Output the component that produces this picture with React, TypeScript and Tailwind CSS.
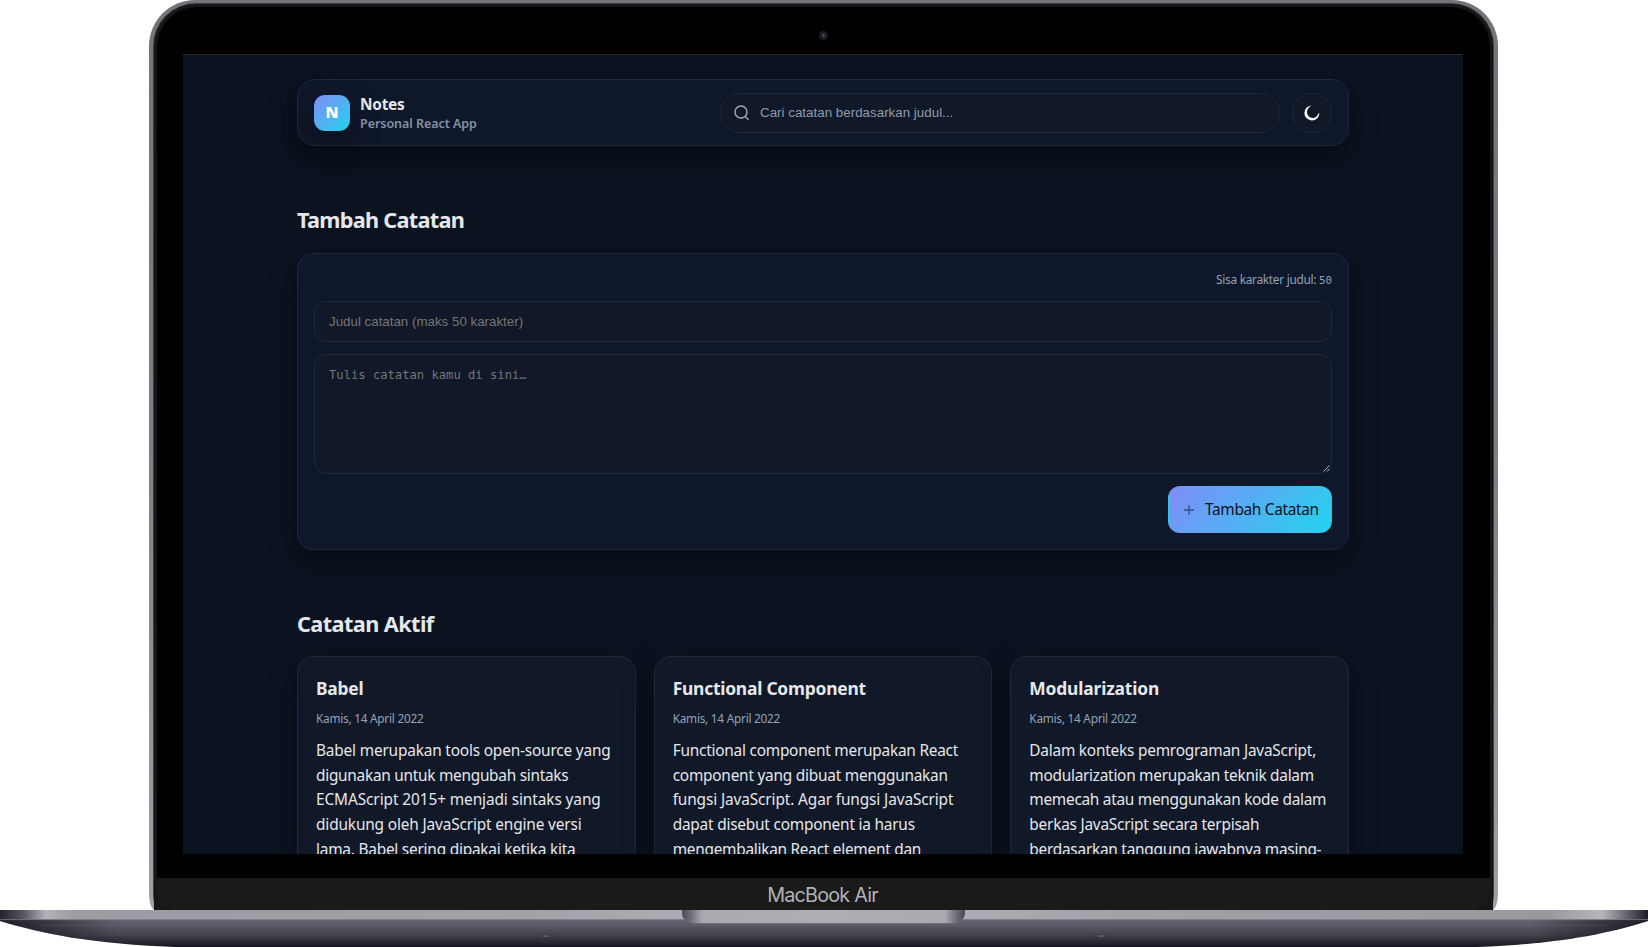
type Line = [text: string, tracking: string];

const notes: { title: string; tracking: string; lines: Line[] }[] = [
  {
    title: "Babel",
    tracking: "tracking-[-0.2px]",
    lines: [
      ["Babel merupakan tools open-source yang", "tracking-[-0.18px]"],
      ["digunakan untuk mengubah sintaks", "tracking-[-0.27px]"],
      ["ECMAScript 2015+ menjadi sintaks yang", "tracking-[-0.09px]"],
      ["didukung oleh JavaScript engine versi", "tracking-[-0.15px]"],
      ["lama. Babel sering dipakai ketika kita", "tracking-[-0.22px]"],
    ],
  },
  {
    title: "Functional Component",
    tracking: "tracking-[-0.22px]",
    lines: [
      ["Functional component merupakan React", "tracking-[-0.23px]"],
      ["component yang dibuat menggunakan", "tracking-[-0.23px]"],
      ["fungsi JavaScript. Agar fungsi JavaScript", "tracking-[-0.12px]"],
      ["dapat disebut component ia harus", "tracking-[-0.21px]"],
      ["mengembalikan React element dan", "tracking-[-0.26px]"],
    ],
  },
  {
    title: "Modularization",
    tracking: "tracking-[-0.16px]",
    lines: [
      ["Dalam konteks pemrograman JavaScript,", "tracking-[-0.22px]"],
      ["modularization merupakan teknik dalam", "tracking-[-0.27px]"],
      ["memecah atau menggunakan kode dalam", "tracking-[-0.27px]"],
      ["berkas JavaScript secara terpisah", "tracking-[-0.23px]"],
      ["berdasarkan tanggung jawabnya masing-", "tracking-[-0.25px]"],
    ],
  },
];

function Header() {
  return (
    <header className="flex h-[67px] items-center rounded-[18px] border border-[#1e2838] bg-[#0f172a] px-4 shadow-[0_10px_30px_rgba(0,0,0,0.35)]">
      <div className="flex size-9 items-center justify-center rounded-[11px] bg-[linear-gradient(135deg,#818cf8,#22d3ee)] shadow-[0_10px_30px_rgba(0,0,0,0.35)]">
        <span className="text-[15.5px] leading-none font-black text-white">N</span>
      </div>
      <div className="ml-[10px] flex flex-col pt-[2px]">
        <span className="text-[15.4px] leading-[19px] font-bold tracking-[-0.25px]">Notes</span>
        <span className="text-[12.5px] leading-[19px] font-semibold tracking-[-0.05px] text-[#8491a5]">Personal React App</span>
      </div>
      <div className="ml-auto flex h-10 w-[560px] items-center rounded-full border border-[#1f2937] bg-[#111827] pl-[13px]">
        <svg width="16" height="16" viewBox="0 0 16 16" fill="none" stroke="#a3a9b5" strokeWidth="1.4" className="shrink-0">
          <circle cx="7" cy="7" r="6" />
          <path d="M11.2 11.5 14.5 14.8" />
        </svg>
        <span className="ml-[10px] font-['Liberation_Sans',sans-serif] text-[13.333px] leading-4 tracking-[0.02px] text-[#8e9bb0]">
          Cari catatan berdasarkan judul...
        </span>
      </div>
      <button className="ml-3 flex size-10 items-center justify-center rounded-full border border-[#1f2937] bg-[#111827]">
        <svg width="16" height="16" viewBox="0 0 16 16" fill="#fff">
          <path d="M7.6 0.5A7.5 7.5 0 1 0 15.4 8.2L14.3 8.6A5.9 5.9 0 0 1 9.2 13C5.8 13.2 3 10.6 3 7.1 3 4.2 4.8 2 7.6 0.5Z" />
        </svg>
      </button>
    </header>
  );
}

function NoteForm() {
  return (
    <section className="mt-[17px] flex h-[297px] flex-col rounded-2xl border border-[#1e2838] bg-[#0f172a] px-4 shadow-[0_10px_30px_rgba(0,0,0,0.35)]">
      <p className="mt-[15px] h-5 shrink-0 text-right text-[11.9px] leading-5 tracking-[-0.3px] text-[#94a3b8]">
        Sisa karakter judul: <span className="font-['DejaVu_Sans_Mono',monospace] text-[10.8px] tracking-normal">50</span>
      </p>
      <div className="mt-3 flex h-[41px] shrink-0 items-center rounded-xl border border-[#1f2937] bg-[#111827] px-[14px] font-['Liberation_Sans',sans-serif] text-[13.333px] text-[#757575]">
        Judul catatan (maks 50 karakter)
      </div>
      <div className="relative mt-3 h-[120px] shrink-0 rounded-xl border border-[#1f2937] bg-[#111827] px-[14px] pt-3 font-['DejaVu_Sans_Mono',monospace] text-[12.17px] leading-4 text-[#757575]">
        Tulis catatan kamu di sini…
        <svg className="absolute right-px bottom-px" width="7" height="7" viewBox="0 0 7 7" stroke="#c8c8c8" strokeWidth="0.9">
          <path d="M0.5 6.5 6.5 0.5M4 6.5 6.5 4" />
        </svg>
      </div>
      <button className="mt-3 flex h-[47px] w-[164px] shrink-0 items-center self-end rounded-xl border border-transparent bg-[linear-gradient(135deg,#818cf8,#22d3ee)] pl-[15px] text-[#0b1220]">
        <svg width="10" height="10" viewBox="0 0 10 10" stroke="#0b1220" strokeOpacity="0.55" strokeWidth="1.3">
          <path d="M5 0v10M0 5h10" />
        </svg>
        <span className="ml-[11px] pt-px text-[15.4px] leading-6 tracking-[-0.32px]">Tambah Catatan</span>
      </button>
    </section>
  );
}

function NoteList() {
  return (
    <div className="mt-[16px] grid grid-cols-3 gap-[18px]">
      {notes.map((n) => (
        <article key={n.title} className="h-[300px] rounded-2xl border border-[#1e2838] bg-[#111827] px-[18px] pt-[18px] shadow-[0_10px_30px_rgba(0,0,0,0.35)]">
          <h3 className={"text-[17.4px] leading-[26px] font-bold " + n.tracking}>{n.title}</h3>
          <p className="mt-[7px] text-[11.8px] leading-5 tracking-[-0.24px] text-[#94a3b8]">Kamis, 14 April 2022</p>
          <div className="mt-[10.8px] text-[15.4px] leading-[24.8px]">
            {n.lines.map(([text, tracking]) => (
              <p key={text} className={"whitespace-nowrap " + tracking}>{text}</p>
            ))}
          </div>
        </article>
      ))}
    </div>
  );
}

function Base() {
  return (
    <svg width="1648" height="37" viewBox="0 0 1648 37" className="block shrink-0">
      <defs>
        <linearGradient id="body" x1="0" y1="0" x2="0" y2="1">
          <stop offset="0" stopColor="#646570" />
          <stop offset="0.2" stopColor="#595a65" />
          <stop offset="0.55" stopColor="#44454e" />
          <stop offset="0.85" stopColor="#25262f" />
          <stop offset="1" stopColor="#12131e" />
        </linearGradient>
        <linearGradient id="lip" x1="0" y1="0" x2="1" y2="0">
          <stop offset="0" stopColor="#22232a" />
          <stop offset="0.014" stopColor="#55565e" />
          <stop offset="0.028" stopColor="#b2b3b8" />
          <stop offset="0.045" stopColor="#9c9da2" />
          <stop offset="0.3" stopColor="#a0a1a6" />
          <stop offset="0.5" stopColor="#b4b5ba" />
          <stop offset="0.7" stopColor="#a0a1a6" />
          <stop offset="0.94" stopColor="#98999e" />
          <stop offset="0.972" stopColor="#b6b7bb" />
          <stop offset="0.986" stopColor="#6a6b72" />
          <stop offset="1" stopColor="#1c1d24" />
        </linearGradient>
        <linearGradient id="ends" x1="0" y1="0" x2="1" y2="0">
          <stop offset="0" stopColor="#0c0d16" stopOpacity="0.8" />
          <stop offset="0.07" stopColor="#0c0d16" stopOpacity="0" />
          <stop offset="0.93" stopColor="#0c0d16" stopOpacity="0" />
          <stop offset="1" stopColor="#0c0d16" stopOpacity="0.8" />
        </linearGradient>
        <linearGradient id="notch" x1="0" y1="0" x2="1" y2="0">
          <stop offset="0" stopColor="#4a4b54" />
          <stop offset="0.03" stopColor="#6c6d75" />
          <stop offset="0.07" stopColor="#a9aaaf" />
          <stop offset="0.5" stopColor="#adaeb3" />
          <stop offset="0.93" stopColor="#a9aaaf" />
          <stop offset="0.97" stopColor="#6c6d75" />
          <stop offset="1" stopColor="#4a4b54" />
        </linearGradient>
      </defs>
      <path d="M0 9H1648V11C1610 23 1560 34 1477 37H175C90 34 40 23 0 11Z" fill="url(#body)" />
      <path d="M0 9H1648V11C1610 23 1560 34 1477 37H175C90 34 40 23 0 11Z" fill="url(#ends)" />
      <path d="M40 15.3H1608" stroke="#6e6f7a" strokeOpacity="0.5" strokeWidth="0.7" />
      <rect width="1648" height="9.5" fill="url(#lip)" />
      <path d="M0 9.6H1648" stroke="#7f8087" strokeWidth="0.8" />
      <path d="M682 0H965V3C965 9 960 13.5 951 13.5H696C687 13.5 682 9 682 3Z" fill="url(#notch)" />
      <path d="M684 8C686 11.5 690 13.5 696 13.5H951C957 13.5 961 11.5 963 8" fill="none" stroke="#6b6c74" strokeWidth="0.8" />
      <ellipse cx="546" cy="26" rx="9" ry="1.6" fill="#3a3b44" />
      <ellipse cx="546" cy="26" rx="4" ry="0.7" fill="#63646e" />
      <ellipse cx="1101" cy="26" rx="9" ry="1.6" fill="#3a3b44" />
      <ellipse cx="1101" cy="26" rx="4" ry="0.7" fill="#63646e" />
    </svg>
  );
}

export default function App() {
  return (
    <div className="flex h-[947px] w-[1648px] flex-col overflow-hidden bg-white font-['Noto_Sans',sans-serif] text-[#e5e7eb]">
      <div className="ml-[149px] h-[910px] w-[1349px] shrink-0 rounded-t-[46px] rounded-b-[6px_16px] bg-[linear-gradient(#74757b,#7e7f85_50%,#a0a1a8)] px-[4px] pt-[3px]">
        <div className="h-full rounded-t-[43px] rounded-b-[6px_16px] bg-[#3a3b40] px-px pt-px">
          <div className="h-full rounded-t-[42px] bg-[#161618] px-[3px] pt-[3px]">
            <div className="flex h-[903px] flex-col overflow-hidden rounded-t-[40px] rounded-b-[16px] bg-black">
              <div className="flex h-[47px] shrink-0 items-start justify-center pt-[24px]">
                <div className="flex size-[9px] items-center justify-center rounded-full bg-[#1c1c1e]">
                  <div className="size-[3px] rounded-full bg-[#4a4c55]" />
                </div>
              </div>
              <main className="ml-[26px] h-[800px] w-[1280px] shrink-0 overflow-hidden border-t border-[#2b2b2b] bg-[#0b1320] px-[114px] pt-[24px]">
                <Header />
                <h2 className="mt-[58px] text-[21.7px] leading-[32px] font-bold tracking-[-0.72px]">Tambah Catatan</h2>
                <NoteForm />
                <h2 className="mt-[58px] text-[21.7px] leading-[32px] font-bold tracking-[-0.58px]">Catatan Aktif</h2>
                <NoteList />
              </main>
              <div className="mt-6 flex h-8 shrink-0 justify-center bg-[#1a1a1a]">
                <span className="pt-[5px] pr-[2px] font-['Inter',sans-serif] text-[19.8px] leading-6 tracking-[-0.8px] text-[#b2b2b7]">MacBook Air</span>
              </div>
            </div>
          </div>
        </div>
      </div>
      <Base />
    </div>
  );
}
